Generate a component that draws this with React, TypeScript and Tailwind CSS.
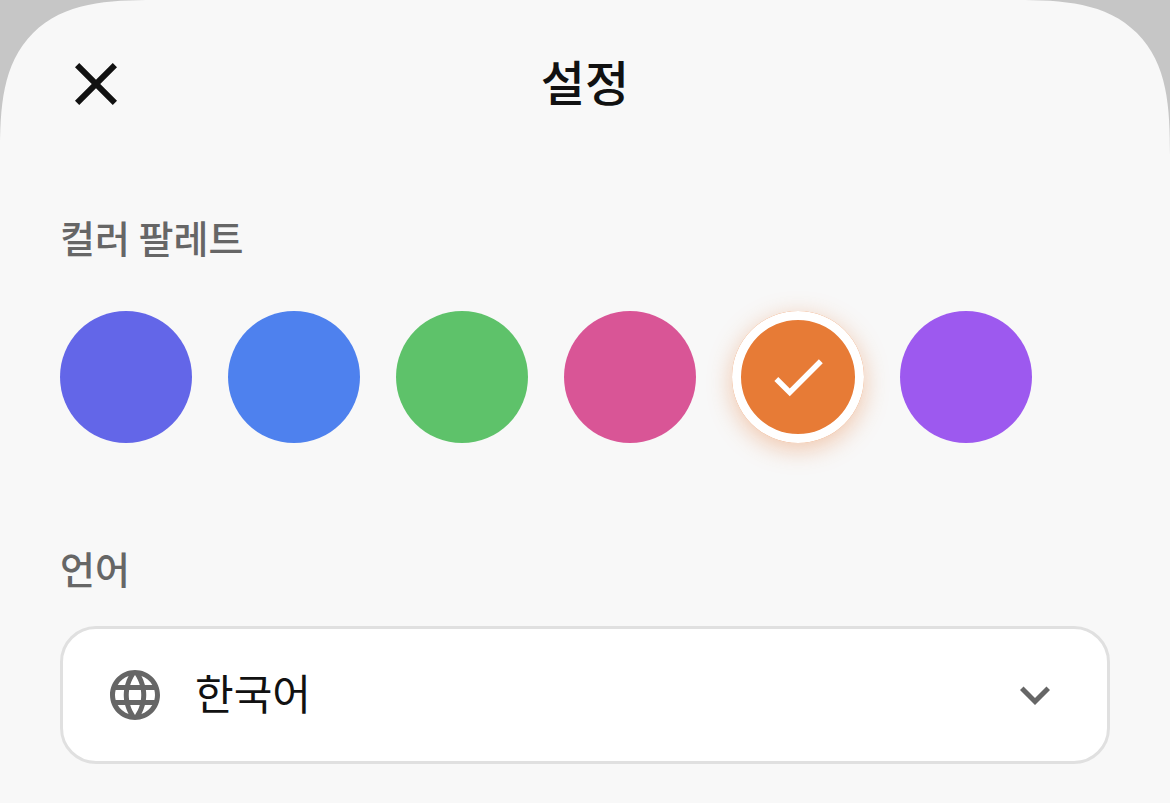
import { useState } from "react";
import clsx from "clsx";
import { MdCheck, MdClose, MdExpandMore, MdLanguage } from "react-icons/md";

const palettes = [
  { id: "indigo", label: "인디고", className: "bg-[#6366e8]" },
  { id: "blue", label: "블루", className: "bg-[#4e81ee]" },
  { id: "green", label: "그린", className: "bg-[#5ec26a]" },
  { id: "pink", label: "핑크", className: "bg-[#d95596]" },
  { id: "orange", label: "오렌지", className: "bg-[#e77b36]" },
  { id: "purple", label: "퍼플", className: "bg-[#9d59ef]" },
];

const languages = [
  { value: "ko", label: "한국어" },
  { value: "en", label: "English" },
  { value: "ja", label: "日本語" },
];

const Header = () => {
  return (
    <header className="grid grid-cols-[72px_1fr_72px] items-start">
      <button type="button" aria-label="닫기" className="text-[#111111]">
        <MdClose size={72} />
      </button>
      <h1 className="text-center text-5xl leading-[64px] font-medium text-[#111111]">
        설정
      </h1>
    </header>
  );
};

const PalettePicker = () => {
  const [selected, setSelected] = useState("orange");

  return (
    <fieldset className="mt-[90px]">
      <legend className="text-[38px] leading-[54px] font-medium text-[#666666]">
        컬러 팔레트
      </legend>
      <div className="mt-[47px] flex flex-wrap gap-9">
        {palettes.map((palette) => (
          <label
            key={palette.id}
            className={clsx(
              "grid size-[132px] cursor-pointer place-items-center rounded-full",
              palette.className,
              selected === palette.id &&
                "shadow-[inset_0_0_0_9px_#ffffff,0_6px_24px_rgba(231,123,54,0.4)]"
            )}
          >
            <input
              type="radio"
              name="palette"
              value={palette.id}
              aria-label={palette.label}
              checked={selected === palette.id}
              onChange={() => setSelected(palette.id)}
              className="sr-only"
            />
            {selected === palette.id && (
              <MdCheck size={66} className="text-white" />
            )}
          </label>
        ))}
      </div>
    </fieldset>
  );
};

const LanguageSelect = () => {
  const [language, setLanguage] = useState("ko");

  return (
    <section className="mt-[98px]">
      <label
        htmlFor="language"
        className="block text-[38px] leading-[54px] font-medium text-[#666666]"
      >
        언어
      </label>
      <div className="mt-[31px] grid items-center">
        <select
          id="language"
          value={language}
          onChange={(e) => setLanguage(e.target.value)}
          className="col-start-1 row-start-1 h-[138px] w-full appearance-none rounded-[36px] border-3 border-[#e0e0e0] bg-white px-[132px] pb-2 text-[42px] text-[#111111]"
        >
          {languages.map((item) => (
            <option key={item.value} value={item.value}>
              {item.label}
            </option>
          ))}
        </select>
        <MdLanguage
          size={60}
          className="pointer-events-none col-start-1 row-start-1 ml-[45px] text-[#666666]"
        />
        <MdExpandMore
          size={60}
          className="pointer-events-none col-start-1 row-start-1 mr-[45px] justify-self-end text-[#666666]"
        />
      </div>
    </section>
  );
};

const App = () => {
  return (
    <div className="min-h-screen bg-[#c6c6c6] font-['Noto_Sans_CJK_KR',sans-serif]">
      <main className="min-h-screen rounded-t-[112px] bg-[#f8f8f8] px-[60px] pt-12 pb-9 supports-[corner-shape:round]:rounded-t-[155px] supports-[corner-shape:round]:[corner-shape:superellipse(1.53)]">
        <Header />
        <PalettePicker />
        <LanguageSelect />
      </main>
    </div>
  );
};

export default App;
